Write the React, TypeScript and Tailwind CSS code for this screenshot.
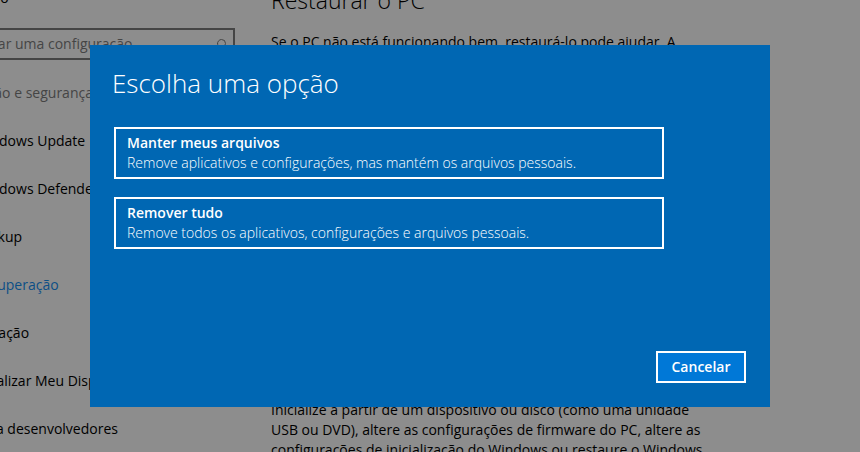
import { Search } from "lucide-react";

const navItems = [
  { label: "Windows Update" },
  { label: "Windows Defender" },
  { label: "Backup" },
  { label: "Recuperação", active: true },
  { label: "Ativação" },
  { label: "Localizar Meu Dispositivo" },
  { label: "Para desenvolvedores" },
];

const resetOptions = [
  {
    title: "Manter meus arquivos",
    description: "Remove aplicativos e configurações, mas mantém os arquivos pessoais.",
  },
  {
    title: "Remover tudo",
    description: "Remove todos os aplicativos, configurações e arquivos pessoais.",
  },
];

function Sidebar() {
  return (
    <aside className="-ml-16 w-[299px] shrink-0 whitespace-nowrap">
      <a href="#inicio" className="-mt-3 block pl-[38px] leading-5">
        Início
      </a>
      <label className="mt-5 flex h-8 items-center border-2 border-[#454545] pr-1.5 pl-4">
        <input
          type="text"
          aria-label="Localizar uma configuração"
          placeholder="Localizar uma configuração"
          className="min-w-0 flex-1 bg-transparent outline-none placeholder:text-[#454545]"
        />
        <Search className="h-3 w-3 -scale-x-100 text-[#454545]" strokeWidth={2} />
      </label>
      <h2 className="mt-[23px] leading-5 text-[#454545]">Atualização e segurança</h2>
      <nav className="mt-3.5 pl-[38px]">
        {navItems.map((item) => (
          <a
            key={item.label}
            href="#"
            className={item.active ? "flex h-12 items-center text-[#0c4f86]" : "flex h-12 items-center"}
          >
            {item.label}
          </a>
        ))}
      </nav>
    </aside>
  );
}

function Content() {
  return (
    <main className="ml-9 w-[444px] leading-5">
      <h1 className="-mt-4 text-[23px] leading-8 font-light">Restaurar o PC</h1>
      <p className="mt-4">Se o PC não está funcionando bem, restaurá-lo pode ajudar. A</p>
      <p className="mt-[348px]">
        Inicialize a partir de um dispositivo ou disco (como uma unidade USB ou DVD), altere as
        configurações de firmware do PC, altere as configurações de inicialização do Windows ou
        restaure o Windows
      </p>
    </main>
  );
}

function ResetDialog() {
  return (
    <div className="absolute inset-0 flex items-center justify-center">
      <section
        role="dialog"
        aria-labelledby="reset-title"
        className="flex min-h-[362px] w-[680px] max-w-full flex-col bg-[#0067b3] p-6 pt-5 text-white"
      >
        <h2 id="reset-title" className="-ml-0.5 text-[26px] leading-9 font-light">
          Escolha uma opção
        </h2>
        <div className="mt-[26px] mr-[82px] flex flex-col gap-[18px]">
          {resetOptions.map((option) => (
            <button
              key={option.title}
              type="button"
              className="border-2 border-white px-[11px] py-1 text-left leading-5"
            >
              <span className="block font-semibold">{option.title}</span>
              <span className="block font-light">{option.description}</span>
            </button>
          ))}
        </div>
        <button
          type="button"
          className="mt-auto h-8 w-[90px] self-end border-2 border-white bg-[#0078d7] font-semibold"
        >
          Cancelar
        </button>
      </section>
    </div>
  );
}

export default function App() {
  return (
    <div className="relative flex h-screen overflow-hidden bg-[#8d8d8d] font-['Open_Sans','Noto_Sans',sans-serif] text-sm text-black">
      <Sidebar />
      <Content />
      <ResetDialog />
    </div>
  );
}
